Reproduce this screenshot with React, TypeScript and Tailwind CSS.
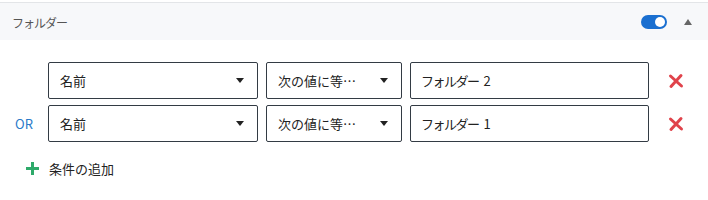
import { useState } from "react";

const font = { fontFamily: '"Noto Sans CJK JP", "Noto Sans", sans-serif' };

const Caret = () => (
  <svg width="8" height="5" viewBox="0 0 8 5" className="shrink-0">
    <path d="M0 0 L8 0 L4 5 Z" fill="#222" />
  </svg>
);

const RemoveIcon = () => (
  <svg width="16" height="16" viewBox="0 0 16 16">
    <path
      d="M2.5 3 L13.5 13 M13 2.5 L3 13.5"
      stroke="#e0434b"
      strokeWidth="3"
      strokeLinecap="round"
    />
  </svg>
);

const SelectBox = ({ label, width }: { label: string; width: string }) => (
  <div
    className={`${width} h-[37px] flex items-center justify-between pl-[11px] pr-[13px] border border-[#333b44] rounded-[2px] bg-white text-[13px] text-[#222]`}
  >
    <span>{label}</span>
    <Caret />
  </div>
);

type Condition = { id: number; field: string; op: string; name: string; num: string };

const App = () => {
  const [enabled] = useState(true);
  const [conditions] = useState<Condition[]>([
    { id: 1, field: "名前", op: "次の値に等…", name: "フォルダー", num: "2" },
    { id: 2, field: "名前", op: "次の値に等…", name: "フォルダー", num: "1" },
  ]);

  return (
    <div className="w-[708px] h-[200px] bg-white" style={font}>
      <div className="mt-[2px] border-t border-[#e3e5e8] bg-[#f7f8fa] h-[38px] flex items-center justify-between pl-[12px] pr-[16px]">
        <span className="pt-[2px] text-[12px] tracking-[-1px] text-[#555]">フォルダー</span>
        <div className="flex items-center gap-[17px]">
          <div
            className={`w-[26px] h-[14px] rounded-full flex items-center px-[2px] ${
              enabled ? "bg-[#1a6fd0] justify-end" : "bg-gray-400 justify-start"
            }`}
          >
            <div className="w-[10px] h-[10px] rounded-full bg-white" />
          </div>
          <svg width="8" height="6" viewBox="0 0 8 6">
            <path d="M0 6 L8 6 L4 0 Z" fill="#666" />
          </svg>
        </div>
      </div>

      <div className="pt-[22px] flex flex-col gap-[6px]">
        {conditions.map((c, i) => (
          <div key={c.id} className="flex items-center">
            <div className="w-[48px] pl-[15px] text-[13px] text-[#2a7ac9]">
              {i > 0 ? "OR" : ""}
            </div>
            <div className="flex items-center gap-[8px]">
              <SelectBox label={c.field} width="w-[210px]" />
              <SelectBox label={c.op} width="w-[136px]" />
              <div className="w-[239px] h-[37px] flex items-center gap-[5px] pl-[10px] border border-[#333b44] rounded-[2px] bg-white text-[13px] text-[#222]">
                <span className="tracking-[-1.5px]">{c.name}</span>
                <span>{c.num}</span>
              </div>
            </div>
            <button className="ml-[19px]">
              <RemoveIcon />
            </button>
          </div>
        ))}
      </div>

      <button className="mt-[17px] ml-[25px] flex items-center gap-[9px] text-[13px] text-[#222]">
        <svg width="15" height="15" viewBox="0 0 15 15">
          <path d="M7.5 1 V14 M1 7.5 H14" stroke="#2eaa6a" strokeWidth="3" />
        </svg>
        <span>条件の追加</span>
      </button>
    </div>
  );
};

export default App;
